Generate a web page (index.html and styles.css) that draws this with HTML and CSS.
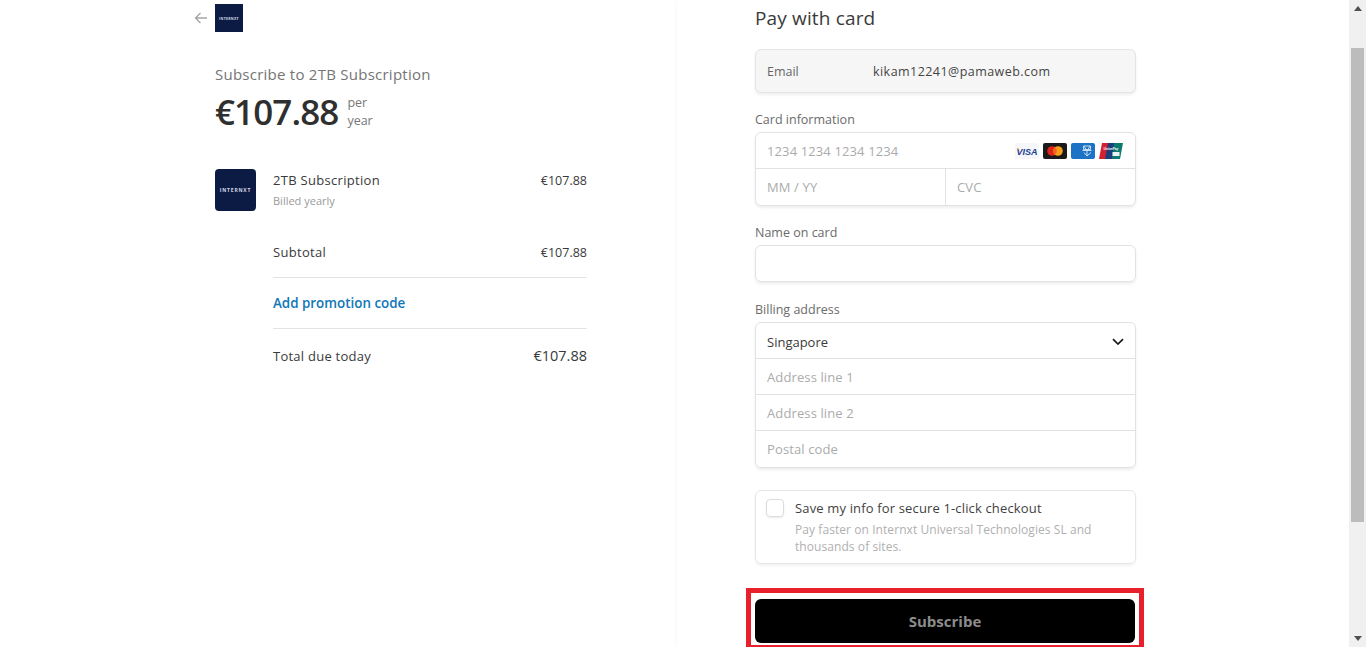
FILE: index.html
```html
<!DOCTYPE html>
<html lang="en">
<head>
<meta charset="utf-8">
<title>Subscribe to 2TB Subscription</title>
<link rel="stylesheet" href="styles.css">
</head>
<body>
<div class="page">
  <section class="summary">
    <div class="top">
      <svg class="back" width="14" height="12" viewBox="0 0 14 12"><path d="M13 6H1.5M6.5 1 1.5 6l5 5" fill="none" stroke="#a6a6a6" stroke-width="1.4"/></svg>
      <div class="logo-small"><span>INTERNXT</span></div>
    </div>
    <div class="sub-title">Subscribe to 2TB Subscription</div>
    <div class="price-row">
      <span class="price">€107.88</span>
      <span class="per">per<br>year</span>
    </div>
    <div class="item">
      <div class="logo-big"><span>INTERNXT</span></div>
      <div class="item-text">
        <div class="item-name">2TB Subscription</div>
        <div class="item-note">Billed yearly</div>
      </div>
      <div class="item-price">€107.88</div>
    </div>
    <div class="totals">
      <div class="line subtotal"><span>Subtotal</span><span class="sub-price">€107.88</span></div>
      <div class="line promo"><span>Add promotion code</span></div>
      <div class="line total"><span>Total due today</span><span class="total-price">€107.88</span></div>
    </div>
  </section>
  <section class="pay">
    <h1 class="pay-title">Pay with card</h1>
    <div class="email-box"><span class="email-label">Email</span><span class="email-value">kikam12241@pamaweb.com</span></div>
    <div class="label first">Card information</div>
    <div class="box">
      <div class="row card-row">
        <span class="ph">1234 1234 1234 1234</span>
        <span class="brands">
          <svg width="24" height="16" viewBox="0 0 24 16"><rect width="24" height="16" rx="2" fill="#f5f7fb"/><text x="12" y="11.500" text-anchor="middle" class="visa">VISA</text><path d="M1.500 5l2 0 .6 2z" fill="#f0b030"/></svg>
          <svg width="24" height="16" viewBox="0 0 24 16"><rect width="24" height="16" rx="2" fill="#1a1a1a"/><circle cx="9" cy="8" r="4.800" fill="#e2231a"/><circle cx="15" cy="8" r="4.800" fill="#f79e1b"/><path d="M12 4.200a4.800 4.800 0 0 1 0 7.600 4.800 4.800 0 0 1 0-7.600" fill="#f2651f"/></svg>
          <svg width="24" height="16" viewBox="0 0 24 16"><rect width="24" height="16" rx="2" fill="#1c72c4"/><path d="M12.500 3h7v3.500h-7zM11.500 7.500h9M13 9.500l3 3.500 4-3.500M16 6.500V13M13 3l2 3.500M19 3l-2 3.500" fill="none" stroke="#d6e8f8" stroke-width=".9"/></svg>
          <svg width="24" height="16" viewBox="0 0 24 16"><path d="M3 0h8L8 16H0z" fill="#d6202f"/><path d="M9 0h8l-3 16H6z" fill="#1a3f7c"/><path d="M15 0h9l-3 16h-8z" fill="#0d7a70"/><text x="4.500" y="6.500" class="union">UnionPay</text><rect x="13.500" y="9" width="7" height="4" fill="#e8f3f1"/></svg>
        </span>
      </div>
      <div class="row split">
        <span class="cell first-cell ph">MM / YY</span>
        <span class="cell cvc ph">CVC</span>
      </div>
    </div>
    <div class="label">Name on card</div>
    <div class="box name-input"></div>
    <div class="label billing">Billing address</div>
    <div class="box">
      <div class="row addr country"><span>Singapore</span>
        <svg width="12" height="8" viewBox="0 0 12 8"><path d="M1 1.200 6 6l5-4.800" fill="none" stroke="#1a1a1a" stroke-width="1.700"/></svg>
      </div>
      <div class="row addr ph">Address line 1</div>
      <div class="row addr ph">Address line 2</div>
      <div class="row addr ph">Postal code</div>
    </div>
    <div class="save">
      <span class="check"></span>
      <div class="save-text">
        <div class="save-title">Save my info for secure 1-click checkout</div>
        <div class="save-note">Pay faster on Internxt Universal Technologies SL and thousands of sites.</div>
      </div>
    </div>
    <div class="highlight"><div class="subscribe">Subscribe</div></div>
  </section>
  <div class="scrollbar">
    <span class="arrow up"></span>
    <div class="track"><div class="thumb"></div></div>
    <span class="arrow down"></span>
  </div>
</div>
</body>
</html>
```
FILE: styles.css
```css
* { box-sizing: border-box; }
html, body { margin: 0; height: 100%; overflow: hidden; background: #fff; }
body { font-family: "Open Sans", "Noto Sans", sans-serif; color: #303030; font-size: 13px; }
.page { display: flex; height: 647px; width: 1366px; overflow: hidden; }

.summary { width: 675px; padding: 4px 88px 0 194px; box-shadow: 1px 0 5px rgba(0,0,0,.035); flex: none; }
.top { display: flex; align-items: center; gap: 7px; height: 28px; }
.back { display: block; }
.logo-small { width: 28px; height: 28px; background: #0c1b44; display: flex; align-items: center; justify-content: center; }
.logo-small span { font-size: 3.5px; color: #d5d9e4; font-weight: 700; letter-spacing: .3px; }
.sub-title { margin: 32px 0 0 21px; font-size: 15px; line-height: 20px; color: #757575; font-weight: 500; letter-spacing: .25px; }
.price-row { margin: 10px 0 0 21px; display: flex; align-items: center; gap: 9px; height: 36px; }
.price { font-size: 35px; line-height: 36px; font-weight: 600; letter-spacing: -.9px; color: #2f2f2f; }
.per { font-size: 12.5px; line-height: 18px; color: #777; }
.item { margin: 39px 0 0 21px; display: flex; align-items: flex-start; }
.logo-big { width: 41px; height: 42px; border-radius: 4px; background: #0c1b44; display: flex; align-items: center; justify-content: center; flex: none; }
.logo-big span { font-size: 5px; color: #d5d9e4; font-weight: 700; letter-spacing: .8px; }
.item-text { margin-left: 17px; flex: 1; }
.item-name { font-size: 13px; line-height: 22px; font-weight: 500; color: #3a3a3a; letter-spacing: .3px; }
.item-note { font-size: 11px; line-height: 20px; color: #9a9a9a; }
.item-price, .sub-price { padding-top: 1px; font-size: 12.5px; line-height: 22px; font-weight: 500; color: #3a3a3a; letter-spacing: 0; }
.totals { margin: 20px 0 0 79px; }
.line { display: flex; justify-content: space-between; align-items: center; font-weight: 500; color: #3a3a3a; }
.subtotal { height: 47px; padding-bottom: 4px; border-bottom: 1px solid #e3e3e3; letter-spacing: .3px; }
.promo { height: 51px; border-bottom: 1px solid #e3e3e3; color: #0f77b8; font-size: 13.4px; font-weight: 600; }
.total { height: 53px; letter-spacing: .25px; }
.total-price { font-size: 14.5px; letter-spacing: 0; }

.pay { width: 674px; flex: none; padding: 6px 213px 0 80px; }
.pay-title { margin: 0; font-size: 19px; line-height: 25px; font-weight: 500; color: #3a3a3a; letter-spacing: .15px; }
.email-box { margin-top: 18px; height: 44px; border-radius: 6px; background: #f6f6f6; border: 1px solid #e4e4e4; box-shadow: 0 2px 3px rgba(0,0,0,.07); display: flex; align-items: center; padding-left: 11px; font-size: 12.5px; }
.email-label { width: 106px; color: #666; font-weight: 500; }
.email-value { color: #444; font-size: 12.5px; letter-spacing: .45px; }
.label { margin-top: 18px; font-size: 12.5px; line-height: 17px; color: #6b6b6b; font-weight: 500; margin-bottom: 4px; }
.label.billing { margin-top: 19px; }
.box { border-radius: 6px; border: 1px solid #e2e2e2; box-shadow: 0 2px 3px rgba(0,0,0,.07); overflow: hidden; }
.row { display: flex; align-items: center; border-bottom: 1px solid #e2e2e2; }
.row:last-child { border-bottom: 0; }
.card-row { height: 36px; padding: 0 12px 0 11px; justify-content: space-between; }
.ph { color: #ababab; letter-spacing: .12px; }
.brands { display: flex; gap: 4px; align-items: center; }
.brands svg { display: block; }
.visa { font: italic 700 9px "Liberation Sans", sans-serif; fill: #1a3f8c; }
.union { font: italic 700 3.2px "Liberation Sans", sans-serif; fill: #fff; }
.split { height: 36px; }
.cell { flex: 1; height: 100%; padding-left: 11px; display: flex; align-items: center; }
.first-cell { flex: none; width: 189px; }
.cvc { border-left: 1px solid #e2e2e2; }
.name-input { height: 37px; }
.addr { height: 36px; padding: 0 11px; justify-content: space-between; font-size: 13px; }
.country { padding-top: 2px; color: #3a3a3a; font-weight: 500; }
.save { margin-top: 22px; height: 74px; border-radius: 6px; border: 1px solid #e6e6e6; box-shadow: 0 2px 3px rgba(0,0,0,.05); display: flex; padding: 8px 12px 0 10px; }
.check { width: 18px; height: 18px; border-radius: 4px; border: 1px solid #dcdcdc; box-shadow: 0 1px 2px rgba(0,0,0,.08); flex: none; }
.save-text { margin-left: 11px; }
.save-title { font-size: 13px; line-height: 18px; color: #3f3f3f; letter-spacing: .15px; }
.save-note { margin-top: 4px; font-size: 12px; line-height: 17px; color: #b0b0b0; letter-spacing: .07px; }
.highlight { margin: 24px -8px 0 -9px; height: 62px; border: 5px solid #e8202b; padding: 6px 4px 2px; }
.subscribe { height: 44px; background: #000; border-radius: 6px; color: #8c8c8c; font-size: 15px; font-weight: 700; display: flex; align-items: center; justify-content: center; }

.scrollbar { width: 17px; flex: none; background: #f0f0f0; display: flex; flex-direction: column; align-items: center; }
.arrow { width: 0; height: 0; border-left: 4px solid transparent; border-right: 4px solid transparent; flex: none; }
.arrow.up { border-bottom: 5px solid #505050; margin: 6px 0; }
.arrow.down { border-top: 5px solid #505050; margin: 6px 0; }
.track { flex: 1; width: 100%; padding-top: 31px; }
.thumb { width: 13px; height: 474px; margin: 0 auto; background: #bcbcbc; }
```
